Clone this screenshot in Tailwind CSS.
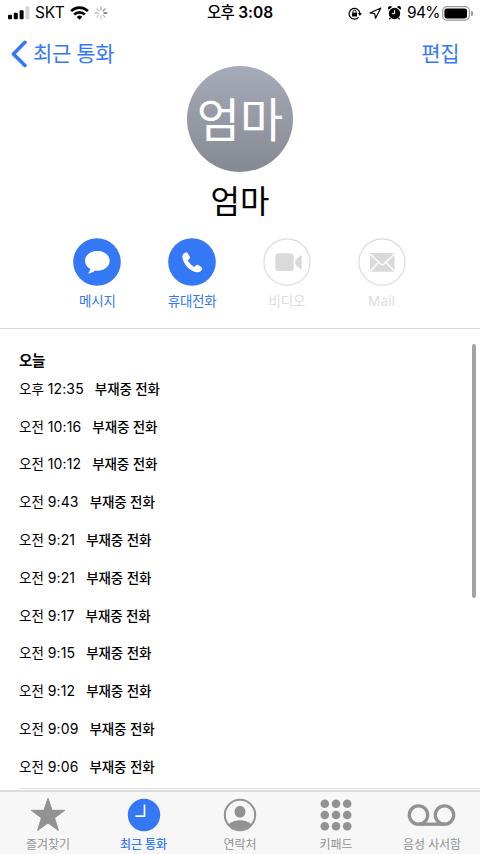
<!DOCTYPE html>
<html lang="ko">
<head>
<meta charset="utf-8">
<title>최근 통화</title>
<script src="https://cdn.jsdelivr.net/npm/@tailwindcss/browser@4"></script>
</head>
<body class="bg-white">
<div class="relative flex h-[854px] w-[480px] flex-col overflow-hidden bg-white font-['Inter','Noto_Sans_CJK_KR',sans-serif] text-black">

  <!-- status bar -->
  <div class="grid h-[26px] shrink-0 grid-cols-3 items-center whitespace-nowrap">
    <div class="flex items-center pl-2">
      <svg class="h-[14px] w-[22px]" viewBox="0 0 22 14"><rect x="0" y="8.7" width="4" height="4.6" rx="1"/><rect x="5.8" y="6.8" width="4" height="6.5" rx="1"/><rect x="11.6" y="4.3" width="4" height="9" rx="1"/><rect x="17.4" y="0.6" width="4" height="12.7" rx="1" fill="#d4d4d4"/></svg>
      <span class="ml-[5px] w-[30px] text-[15.5px] leading-5 tracking-[-0.3px]">SKT</span>
      <svg class="ml-[5px] h-[14px] w-[19px]" viewBox="0 0 19 14" fill="none" stroke="#000" stroke-width="2.700"><path d="M1.1 5.1a12 12 0 0 1 16.8 0"/><path d="M4.2 8.5a7.5 7.5 0 0 1 10.6 0"/><path d="M9.5 13.7 6.7 10.9a4 4 0 0 1 5.6 0z" fill="#000" stroke="none"/></svg>
      <svg class="ml-[5px] h-[14px] w-[14px]" viewBox="-7 -7 14 14" stroke="#888" stroke-width="1.3" stroke-linecap="round"><path d="M0-3V-5.8" stroke="#aaa"/><path d="M2.1-2.1 4.1-4.1" stroke="#888"/><path d="M3 0H5.8" stroke="#666"/><path d="M2.1 2.1 4.1 4.1" stroke="#bbb"/><path d="M0 3V5.8" stroke="#ccc"/><path d="M-2.1 2.1-4.1 4.1" stroke="#ccc"/><path d="M-3 0H-5.8" stroke="#bbb"/><path d="M-2.1-2.1-4.1-4.1" stroke="#bbb"/></svg>
    </div>
    <div class="text-center text-[15.500px] font-semibold leading-5"><span class="font-medium tracking-[-0.6px]">오후</span> 3:08</div>
    <div class="flex items-center justify-end pr-[7px]">
      <svg class="h-[13px] w-[14px]" viewBox="0 0 14 13" fill="none" stroke="#000" stroke-width="1.2"><path d="M10.6 10.3A5.4 5.4 0 1 1 11.9 6.2"/><path d="M9.9 6h4L11.9 9z" fill="#000" stroke="none"/><rect x="4" y="5.8" width="5" height="3.7" rx=".5" fill="#000" stroke="none"/><path d="M5 6V4.7a1.5 1.5 0 0 1 3 0V6" stroke-width="1"/></svg>
      <svg class="ml-[7px] h-[12px] w-[13px]" viewBox="0 0 13 12" fill="none" stroke="#000" stroke-width="1.2" stroke-linejoin="round"><path d="M11.8 1 1 6l4.700.7.8 4.500z"/></svg>
      <svg class="ml-[6px] h-[14px] w-[13px]" viewBox="0 0 13 14"><circle cx="6.5" cy="7.5" r="5.700"/><path d="M.5 3.7A2.2 2.2 0 0 1 4 1zM12.5 3.7A2.2 2.2 0 0 0 9 1z"/><path d="M2.5 12 1.4 13.3M10.5 12l1.1 1.3" stroke="#000" stroke-width="1.3"/><path d="M6.6 4.2v3.5H3.8" fill="none" stroke="#fff"/></svg>
      <span class="ml-[6px] w-[33px] text-[15.500px] leading-5 tracking-[-0.7px]">94%</span>
      <svg class="ml-[2px] h-[15px] w-[31px]" viewBox="0 0 31 15"><rect x=".7" y=".7" width="26.6" height="13.4" rx="4" fill="#fff" stroke="#999" stroke-width="1.2"/><rect x="2.4" y="2.4" width="22.6" height="10" rx="2.3"/><path d="M29 5a2.4 2.4 0 0 1 0 5z" fill="#999"/></svg>
    </div>
  </div>

  <!-- navigation -->
  <div class="flex h-[40px] shrink-0 items-center justify-between pl-[10px] pr-[21px] pt-[15px] text-[21px] leading-[26px] text-[#3478f6]">
    <div class="flex items-center">
      <svg class="h-[28px] w-[18px]" viewBox="0 0 18 28" fill="none" stroke="#3478f6" stroke-width="3.6" stroke-linecap="round" stroke-linejoin="round"><path d="M15 2.3 3.4 14 15 25.5"/></svg>
      <span class="ml-[5px] tracking-[-0.4px]">최근 통화</span>
    </div>
    <span class="tracking-[-0.5px]">편집</span>
  </div>

  <!-- contact header -->
  <div class="flex h-[263px] shrink-0 flex-col items-center border-b border-[#d8d8da]">
    <div class="flex h-[106px] w-[106px] shrink-0 items-center justify-center rounded-full bg-linear-to-b from-[#a6abb9] to-[#858991] pt-[2px] text-[47px] leading-[60px] text-white"><span>엄마</span></div>
    <div class="mt-[8px] h-[44px] text-[32px] leading-[44px]">엄마</div>
    <div class="mr-[1px] mt-[14px] grid w-[379px] grid-cols-4 text-center text-[13.5px] leading-[18px] tracking-[-0.2px] text-[#3478f6]">
      <div class="flex flex-col items-center">
        <svg class="h-[48px] w-[48px]" viewBox="0 0 48 48"><circle cx="24" cy="24" r="23.8" fill="#3478f6"/><path d="M24.3 13C17.3 13 12 17.2 12 22.7c0 3.5 2.1 6.5 5.4 8.2-.2 1.500-1 2.800-1.800 3.700-.4.5-.1.9.5.8 2.500-.3 4.500-1.500 5.800-2.900.8.1 1.600.2 2.400.2 7 0 12.400-4.400 12.400-10S31.300 13 24.300 13z" fill="#fff"/></svg>
        <span class="mt-[6px]">메시지</span>
      </div>
      <div class="flex flex-col items-center">
        <svg class="h-[48px] w-[48px]" viewBox="0 0 48 48"><circle cx="24" cy="24" r="23.8" fill="#3478f6"/><path d="M17.6 14.4c-2.300.8-3.500 2.500-3.200 5 .9 6.900 7.800 13.900 14.400 14.800 2.500.3 4.400-.8 5.200-2.900.4-1 .1-1.700-.7-2.300l-3.100-2c-.8-.5-1.600-.4-2.200.3l-1.100 1.200c-.4.4-.9.4-1.400.1-2.200-1.400-4.100-3.300-5.400-5.500-.3-.5-.2-1 .2-1.400l1-1c.7-.6.8-1.400.4-2.100l-2.100-3.500c-.5-.8-1.100-1-2-.7z" fill="#fff"/></svg>
        <span class="mt-[6px]">휴대전화</span>
      </div>
      <div class="flex flex-col items-center text-[#dcdcde]">
        <svg class="h-[48px] w-[48px]" viewBox="0 0 48 48" fill="#dadadc"><circle cx="24" cy="24" r="23.1" fill="#fff" stroke="#dadadc" stroke-width="1.1"/><rect x="12.3" y="15.3" width="18.4" height="17.8" rx="3.2"/><path d="M32.2 22.3 37.3 17.600q1.400-1 1.400.6V30.400q0 1.600-1.400.6L32.2 26.400z"/></svg>
        <span class="mt-[6px]">비디오</span>
      </div>
      <div class="flex flex-col items-center text-[#dcdcde]">
        <svg class="h-[48px] w-[48px]" viewBox="0 0 48 48"><circle cx="24" cy="24" r="23.1" fill="#fff" stroke="#dadadc" stroke-width="1.1"/><rect x="12" y="15" width="24.5" height="18.8" rx="1" fill="#dadadc"/><path d="M12 15.7 22.6 25.9q1.700 1.400 3.400 0L36.600 15.700M12 33.500l8.800-9.200M36.600 33.500l-8.800-9.200" fill="none" stroke="#fff" stroke-width="1.3"/></svg>
        <span class="mt-[6px] tracking-[0.2px]">Mail</span>
      </div>
    </div>
  </div>

  <!-- call history -->
  <div class="flex h-[461px] shrink-0 flex-col pl-[19px] pt-[21px]">
    <h2 class="h-[20px] pt-px text-[14.5px] font-bold leading-[20px] tracking-[-0.3px]">오늘</h2>
    <div class="grid h-[415.8px] shrink-0 grid-rows-11 items-center whitespace-nowrap text-[13.5px] leading-[20px] [&_b]:ml-[11px] [&_b]:font-medium [&_b]:tracking-[-0.1px] [&_time]:text-[14px] [&_time]:tracking-[0.15px]">
      <p>오후 <time>12:35</time><b>부재중 전화</b></p>
      <p>오전 <time>10:16</time><b>부재중 전화</b></p>
      <p>오전 <time>10:12</time><b>부재중 전화</b></p>
      <p>오전 <time>9:43</time><b>부재중 전화</b></p>
      <p>오전 <time>9:21</time><b>부재중 전화</b></p>
      <p>오전 <time>9:21</time><b>부재중 전화</b></p>
      <p>오전 <time>9:17</time><b>부재중 전화</b></p>
      <p>오전 <time>9:15</time><b>부재중 전화</b></p>
      <p>오전 <time>9:12</time><b>부재중 전화</b></p>
      <p>오전 <time>9:09</time><b>부재중 전화</b></p>
      <p>오전 <time>9:06</time><b>부재중 전화</b></p>
    </div>
    <div class="mt-[2px] h-px shrink-0 bg-[#dedede]"></div>
  </div>
  <div class="absolute right-[4px] top-[344px] h-[254px] w-[4px] rounded-full bg-[#a3a3a3]"></div>

  <!-- tab bar -->
  <div class="grid h-[64px] shrink-0 grid-cols-5 border-t-2 border-[#dcdcdc] bg-[#f7f7f7] text-center text-[12px] leading-[16px] tracking-[-0.1px] text-[#929292]">
    <div class="flex flex-col items-center pt-[4px]">
      <svg class="h-[38px] w-[38px]" viewBox="0 0 38 38" fill="#929292" stroke="#929292" stroke-linejoin="round"><path d="M19 2.300 23.100 14.3H35.800L25.600 21.900 29.400 34.500 19 27 8.600 34.500 12.400 21.900 2.200 14.300H14.900z"/></svg>
      <span class="mt-[3px]">즐겨찾기</span>
    </div>
    <div class="flex flex-col items-center pt-[4px] font-medium text-[#3478f6]">
      <svg class="mr-[1px] h-[38px] w-[38px]" viewBox="0 0 38 38"><circle cx="19" cy="19" r="16.2" fill="#3478f6"/><path d="M19.5 8.5V20.2H10.5" fill="none" stroke="#fff" stroke-width="1.7"/></svg>
      <span class="mt-[3px] mr-[1px]">최근 통화</span>
    </div>
    <div class="flex flex-col items-center pt-[4px]">
      <svg class="h-[38px] w-[38px]" viewBox="0 0 38 38" fill="#929292"><circle cx="19" cy="19" r="15.2" fill="none" stroke="#929292" stroke-width="2"/><ellipse cx="19" cy="15.8" rx="5.5" ry="6"/><path d="M7.6 28.300C10.5 25.700 14.600 24.300 19 24.300s8.500 1.400 11.400 4A15.200 15.200 0 0 1 7.600 28.300z"/></svg>
      <span class="mt-[3px]">연락처</span>
    </div>
    <div class="flex flex-col items-center pt-[4px]">
      <svg class="h-[38px] w-[38px]" viewBox="0 0 38 38" fill="#929292"><circle cx="7.8" cy="7.8" r="4.3"/><circle cx="19" cy="7.8" r="4.3"/><circle cx="30.2" cy="7.8" r="4.3"/><circle cx="7.8" cy="19" r="4.3"/><circle cx="19" cy="19" r="4.3"/><circle cx="30.2" cy="19" r="4.3"/><circle cx="7.8" cy="30.2" r="4.3"/><circle cx="19" cy="30.2" r="4.3"/><circle cx="30.2" cy="30.2" r="4.3"/></svg>
      <span class="mt-[3px]">키패드</span>
    </div>
    <div class="flex flex-col items-center pt-[4px]">
      <svg class="h-[38px] w-[50px]" viewBox="0 0 50 38" fill="none" stroke="#929292" stroke-width="3.300"><circle cx="11.500" cy="19" r="9.2"/><circle cx="37.500" cy="19" r="9.2"/><path d="M11.500 28.2H37.500"/></svg>
      <span class="mt-[3px]">음성 사서함</span>
    </div>
  </div>
</div>
</body>
</html>
